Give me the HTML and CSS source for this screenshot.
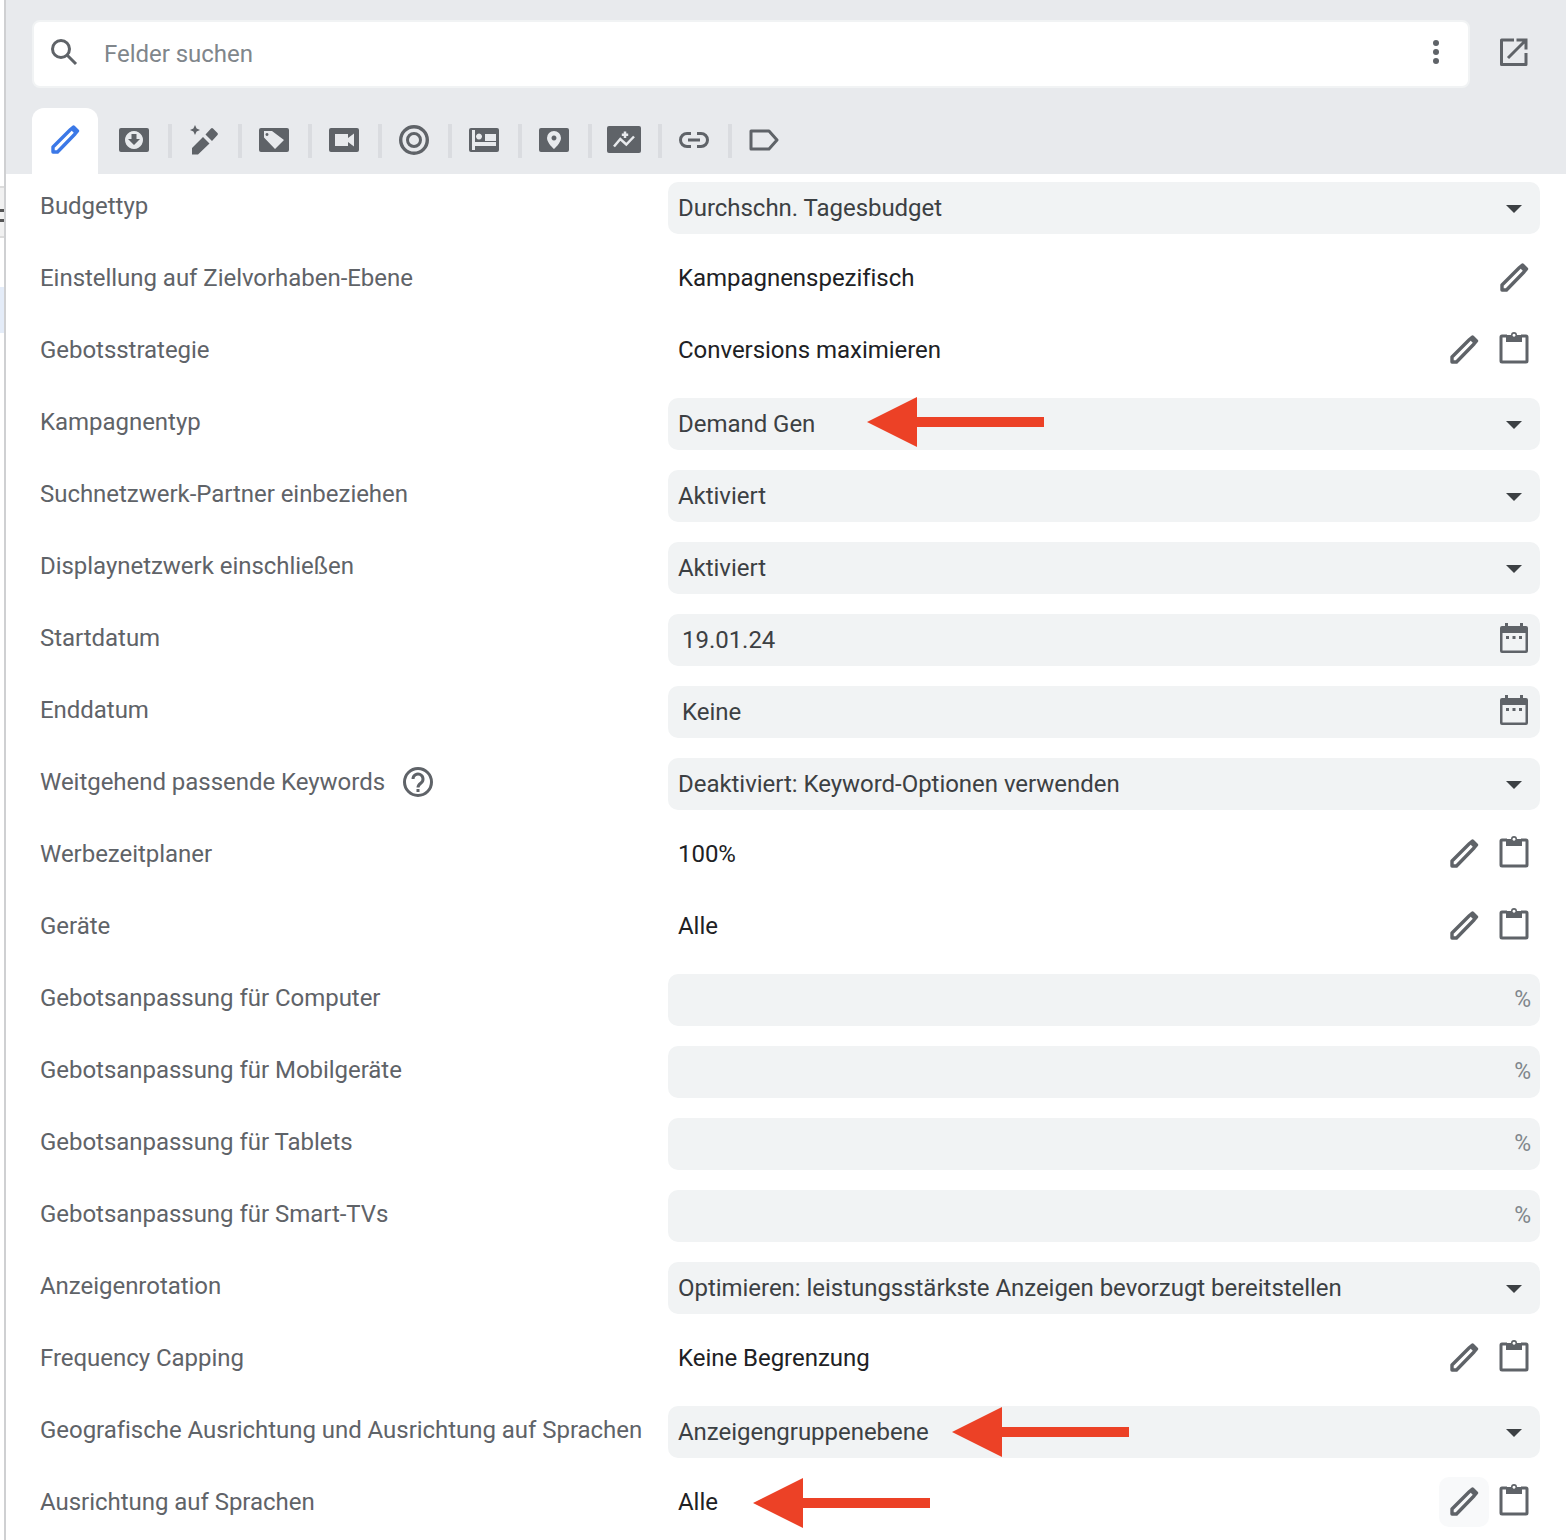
FILE: index.html
```html
<!DOCTYPE html>
<html lang="de">
<head>
<meta charset="utf-8">
<title>Felder</title>
<link rel="stylesheet" href="styles.css">
</head>
<body>
<svg class="defs" width="0" height="0" aria-hidden="true">
  <symbol id="pen" viewBox="0 0 30 30"><path fill="none" stroke="currentColor" stroke-width="3.400" stroke-linejoin="round" d="M3 27v-5L20.500 4.500 l3-2.500 4 4-2.500 3L7.500 27z"/><path fill="currentColor" d="M20 4l3-2.500 5 5-2.500 3z"/></symbol>
  <symbol id="clip" viewBox="0 0 30 34"><path fill="none" stroke="currentColor" stroke-width="3" stroke-linejoin="round" d="M8 5H3a1 1 0 0 0-1 1v24a1 1 0 0 0 1 1h24a1 1 0 0 0 1-1V6a1 1 0 0 0-1-1h-5"/><path fill="currentColor" fill-rule="evenodd" d="M7 4h5a3 3 0 0 1 6 0h5v7H7zM15 2.700a1.500 1.500 0 1 0 .01 0z"/></symbol>
  <symbol id="cal" viewBox="0 0 28 30"><path fill="currentColor" fill-rule="evenodd" d="M5 0h3v3h12V0h3v3h3a2 2 0 0 1 2 2v23a2 2 0 0 1-2 2H2a2 2 0 0 1-2-2V5a2 2 0 0 1 2-2h3zM2.500 10v17.500h23V10zM6 13h3v3H6zM12.500 13h3v3h-3zM19 13h3v3h-3z"/></symbol>
</svg>
<aside class="edge"><div class="edge-box"><i></i><i></i></div><div class="edge-sel"></div></aside>
<main class="panel">
  <header class="head">
    <div class="search-row">
      <div class="search">
        <svg class="i-search" viewBox="0 0 28 28"><circle cx="11" cy="11" r="8.500" fill="none" stroke="currentColor" stroke-width="3"/><path d="M17 17l9 9" stroke="currentColor" stroke-width="3"/></svg>
        <span class="search-text">Felder suchen</span>
        <span class="dots"><i></i><i></i><i></i></span>
      </div>
      <svg class="i-open" viewBox="0 0 28 28"><path fill="none" stroke="currentColor" stroke-width="3" stroke-linejoin="round" d="M14 2H1.500v24.500H26V15"/><path fill="none" stroke="currentColor" stroke-width="3" d="M8 20L25 3M16.500 2H26v9.500" stroke-linejoin="miter"/></svg>
    </div>
    <nav class="tabs">
      <span class="tab active"><svg class="ic30" viewBox="0 0 30 30"><use href="#pen"/></svg></span>
      <span class="tab"><svg class="ic30" viewBox="0 0 30 30"><path fill="currentColor" fill-rule="evenodd" d="M2 3h26a2 2 0 0 1 2 2v20a2 2 0 0 1-2 2H2a2 2 0 0 1-2-2V5a2 2 0 0 1 2-2zM15 6a9 9 0 1 0 .01 0zM12.500 9h5v5H21l-6 6-6-6h3.500z"/></svg></span>
      <span class="tab sep"><svg class="ic30" viewBox="0 0 30 30"><path fill="currentColor" d="M3 29.500v-6.500L14 12l6.500 6.500L9 29.500zM16.500 9.500L22 3.500a1.500 1.500 0 0 1 2 0l4.500 4.500a1.500 1.500 0 0 1 0 2l-5.500 6zM6 0l1.600 3.400L11 5 7.600 6.600 6 10 4.400 6.600 1 5l3.400-1.600z"/></svg></span>
      <span class="tab sep"><svg class="ic30" viewBox="0 0 30 30"><path fill="currentColor" fill-rule="evenodd" d="M2 3h26a2 2 0 0 1 2 2v20a2 2 0 0 1-2 2H2a2 2 0 0 1-2-2V5a2 2 0 0 1 2-2zM5 6v6.500L16 24l9-9L13 6zM8 8a1.500 1.500 0 1 1-.01 0z"/></svg></span>
      <span class="tab sep"><svg class="ic30" viewBox="0 0 30 30"><path fill="currentColor" fill-rule="evenodd" d="M2 3h26a2 2 0 0 1 2 2v20a2 2 0 0 1-2 2H2a2 2 0 0 1-2-2V5a2 2 0 0 1 2-2zM6 9v12h13v-4l6 4.500V8.500L19 13V9z"/></svg></span>
      <span class="tab sep"><svg class="ic30" viewBox="0 0 30 30"><circle cx="15" cy="15" r="13.300" fill="none" stroke="currentColor" stroke-width="3.400"/><circle cx="15" cy="15" r="6.500" fill="none" stroke="currentColor" stroke-width="3"/></svg></span>
      <span class="tab sep"><svg class="ic30" viewBox="0 0 30 30"><path fill="currentColor" fill-rule="evenodd" d="M2 3h26a2 2 0 0 1 2 2v20a2 2 0 0 1-2 2H2a2 2 0 0 1-2-2V5a2 2 0 0 1 2-2zM3 5v20h3v-4h21v-4H6V5zM10 8.500a3 3 0 1 0 .01 0zM16 9v7h11V9z"/></svg></span>
      <span class="tab sep"><svg class="ic30" viewBox="0 0 30 30"><path fill="currentColor" fill-rule="evenodd" d="M2 3h26a2 2 0 0 1 2 2v20a2 2 0 0 1-2 2H2a2 2 0 0 1-2-2V5a2 2 0 0 1 2-2zM15 6a7 7 0 0 0-7 7c0 5 7 11 7 11s7-6 7-11a7 7 0 0 0-7-7zM15 10.500a2.500 2.500 0 1 1-.01 0z"/></svg></span>
      <span class="tab sep"><svg class="ic34" viewBox="0 0 34 27"><rect width="34" height="27" rx="2" fill="currentColor"/><path fill="none" stroke="#e8eaed" stroke-width="2.500" d="M7 20.500L13.300 13l6 5.500 7.700-8M18 5.500v6.500M14.800 8.700h6.400"/></svg></span>
      <span class="tab sep"><svg class="ic30" viewBox="0 0 30 30"><path fill="none" stroke="currentColor" stroke-width="3" d="M12 8.500H8a6.500 6.500 0 0 0 0 13h4M18 8.500h4a6.500 6.500 0 0 1 0 13h-4M9 15h12"/></svg></span>
      <span class="tab sep"><svg class="ic30" viewBox="0 0 30 30"><path fill="none" stroke="currentColor" stroke-width="3" stroke-linejoin="round" d="M2 6h18l8 9-8 9H2z"/></svg></span>
    </nav>
  </header>
  <section class="form">
    <div class="row"><span class="label">Budgettyp</span><div class="select"><span>Durchschn. Tagesbudget</span><b class="caret"></b></div></div>
    <div class="row"><span class="label">Einstellung auf Zielvorhaben-Ebene</span><div class="plain"><span class="val">Kampagnenspezifisch</span><span class="acts"><svg class="ic30 act"><use href="#pen"/></svg></span></div></div>
    <div class="row"><span class="label">Gebotsstrategie</span><div class="plain"><span class="val">Conversions maximieren</span><span class="acts"><svg class="ic30 act"><use href="#pen"/></svg><svg class="ic-clip act"><use href="#clip"/></svg></span></div></div>
    <div class="row"><span class="label">Kampagnentyp</span><div class="select"><span>Demand Gen</span><b class="caret"></b><span class="arrow a1"></span></div></div>
    <div class="row"><span class="label">Suchnetzwerk-Partner einbeziehen</span><div class="select"><span>Aktiviert</span><b class="caret"></b></div></div>
    <div class="row"><span class="label">Displaynetzwerk einschließen</span><div class="select"><span>Aktiviert</span><b class="caret"></b></div></div>
    <div class="row"><span class="label">Startdatum</span><div class="select date"><span>19.01.24</span><svg class="ic-cal"><use href="#cal"/></svg></div></div>
    <div class="row"><span class="label">Enddatum</span><div class="select date"><span>Keine</span><svg class="ic-cal"><use href="#cal"/></svg></div></div>
    <div class="row"><span class="label">Weitgehend passende Keywords<svg class="help" viewBox="0 0 30 30"><circle cx="15" cy="15" r="13.500" fill="none" stroke="currentColor" stroke-width="3"/><path fill="none" stroke="currentColor" stroke-width="3" d="M10 12a5 5 0 1 1 8 4c-2 1.500-3 2.500-3 4.500"/><rect x="13.500" y="22" width="3" height="3" fill="currentColor"/></svg></span><div class="select"><span>Deaktiviert: Keyword-Optionen verwenden</span><b class="caret"></b></div></div>
    <div class="row"><span class="label">Werbezeitplaner</span><div class="plain"><span class="val">100%</span><span class="acts"><svg class="ic30 act"><use href="#pen"/></svg><svg class="ic-clip act"><use href="#clip"/></svg></span></div></div>
    <div class="row"><span class="label">Geräte</span><div class="plain"><span class="val">Alle</span><span class="acts"><svg class="ic30 act"><use href="#pen"/></svg><svg class="ic-clip act"><use href="#clip"/></svg></span></div></div>
    <div class="row"><span class="label">Gebotsanpassung für Computer</span><div class="select pct"><span>%</span></div></div>
    <div class="row"><span class="label">Gebotsanpassung für Mobilgeräte</span><div class="select pct"><span>%</span></div></div>
    <div class="row"><span class="label">Gebotsanpassung für Tablets</span><div class="select pct"><span>%</span></div></div>
    <div class="row"><span class="label">Gebotsanpassung für Smart-TVs</span><div class="select pct"><span>%</span></div></div>
    <div class="row"><span class="label">Anzeigenrotation</span><div class="select"><span>Optimieren: leistungsstärkste Anzeigen bevorzugt bereitstellen</span><b class="caret"></b></div></div>
    <div class="row"><span class="label">Frequency Capping</span><div class="plain"><span class="val">Keine Begrenzung</span><span class="acts"><svg class="ic30 act"><use href="#pen"/></svg><svg class="ic-clip act"><use href="#clip"/></svg></span></div></div>
    <div class="row"><span class="label">Geografische Ausrichtung und Ausrichtung auf Sprachen</span><div class="select"><span>Anzeigengruppenebene</span><b class="caret"></b><span class="arrow a2"></span></div></div>
    <div class="row"><span class="label">Ausrichtung auf Sprachen</span><div class="plain"><span class="val">Alle</span><span class="acts"><span class="hover"><svg class="ic30 act"><use href="#pen"/></svg></span><svg class="ic-clip act"><use href="#clip"/></svg></span><span class="arrow a3"></span></div></div>
  </section>
</main>
</body>
</html>
```
FILE: styles.css
```css
* { box-sizing: border-box; }
html, body { margin: 0; padding: 0; background: #fff; }
body { width: 1566px; height: 1540px; overflow: hidden; display: flex; font-family: Roboto, "Liberation Sans", sans-serif; font-size: 24px; letter-spacing: -0.035px; color: #5f6368; }
.defs { position: absolute; }
.edge { width: 4px; flex: none; padding-top: 186px; }
.edge-box { height: 52px; background: #f1f1f1; border-top: 2px solid #dcdcdc; border-bottom: 2px solid #dcdcdc; padding-top: 21px; display: flex; flex-direction: column; gap: 7px; }
.edge-box i { display: block; height: 3px; background: #555; }
.edge-sel { height: 46px; margin-top: 49px; background: #e4ecf8; }
.panel { flex: 1; border-left: 2px solid #cfd0d2; height: 1540px; }
.head { background: #e8eaed; height: 174px; padding: 20px 0 0 26px; }
.search-row { display: flex; align-items: center; }
.search { width: 1438px; height: 68px; background: #fff; border: 2px solid #f1f3f4; border-radius: 8px; display: flex; align-items: center; padding: 0 29px 0 16px; }
.i-search { width: 28px; height: 28px; color: #5f6368; margin-top: -4px; }
.search-text { margin-left: 26px; color: #80868b; flex: 1; }
.dots { display: flex; flex-direction: column; gap: 3px; margin-top: -4px; }
.dots i { width: 6px; height: 6px; border-radius: 50%; background: #5f6368; display: block; }
.i-open { width: 28px; height: 28px; margin-left: 30px; margin-top: -4px; color: #5f6368; }
.tabs { display: flex; margin-top: 20px; height: 66px; }
.tab { width: 70px; height: 66px; display: flex; align-items: center; justify-content: center; padding-bottom: 3px; color: #5f6368; position: relative; }
.tab:nth-child(2) { margin-left: 1px; }
.tab.active { width: 66px; background: #fff; border-radius: 12px 12px 0 0; color: #3b78e7; }
.tab.sep::before { content: ""; position: absolute; left: -1px; top: 16px; width: 4px; height: 34px; background: #dadce0; }
.ic30 { width: 30px; height: 30px; display: block; }
.ic34 { width: 34px; height: 27px; display: block; }
.form { padding: 8px 26px 0 34px; }
.row { display: grid; grid-template-columns: 628px 872px; align-items: center; height: 52px; margin-bottom: 20px; }
.label { display: flex; align-items: center; margin-bottom: 4px; white-space: nowrap; color: #5f6368; }
.select { background: #f1f3f4; border-radius: 10px; height: 52px; display: flex; align-items: center; justify-content: space-between; padding: 0 18px 0 10px; color: #3c4043; position: relative; }
.caret { width: 0; height: 0; margin-top: 2px; border-left: 8px solid transparent; border-right: 8px solid transparent; border-top: 8px solid #3c4043; }
.date { padding: 0 12px 0 14px; }
.ic-cal { width: 28px; height: 30px; margin-top: -4px; color: #5f6368; }
.pct { justify-content: flex-end; padding: 0 9px 2px 10px; color: #80868b; font-size: 23px; }
.plain { height: 52px; display: flex; align-items: center; justify-content: space-between; padding: 0 11px 4px 10px; position: relative; color: #202124; }
.acts { display: flex; align-items: center; gap: 20px; }
.act { width: 30px; height: 30px; color: #5f6368; display: block; }
.ic-clip { width: 30px; height: 34px; margin-top: -4px; }
.help { width: 30px; height: 30px; margin-left: 18px; }
.hover { background: #f8f9fa; border-radius: 10px; width: 50px; height: 50px; margin: -10px; display: flex; align-items: center; justify-content: center; }
.arrow { position: absolute; height: 50px; }
.arrow::before { content: ""; position: absolute; left: 0; top: 0; border-right: 50px solid #ec4126; border-top: 25px solid transparent; border-bottom: 25px solid transparent; }
.arrow::after { content: ""; position: absolute; left: 49px; right: 0; top: 20px; height: 10px; background: #ec4126; }
.a1 { left: 199px; width: 177px; top: -1px; }
.a2 { left: 284px; width: 177px; top: 1px; }
.a3 { left: 85px; width: 177px; top: 0; }
```
